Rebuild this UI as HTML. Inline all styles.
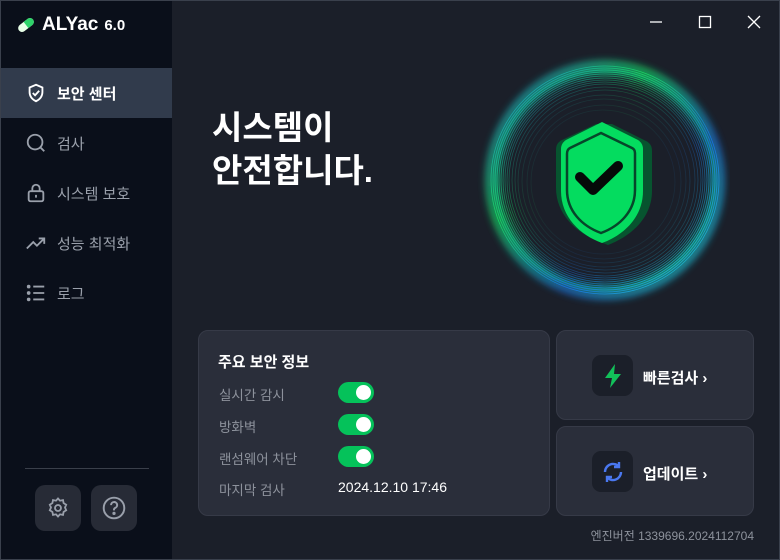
<!DOCTYPE html>
<html><head><meta charset="utf-8"><style>
*{margin:0;padding:0;box-sizing:border-box}
body{width:780px;height:560px;background:#1b1f29;font-family:"Liberation Sans","Noto Sans CJK KR",sans-serif;position:relative;overflow:hidden;color:#fff}
.side{position:absolute;left:1px;top:1px;width:171px;height:558px;background:#0a0f1a}
.logo{position:absolute;left:15px;top:13px;font-size:19px;font-weight:bold;display:flex;align-items:center;gap:6px}
.logo small{font-size:15px}
.nav{position:absolute;left:0;width:171px;height:50px;display:flex;align-items:center;padding-left:24px;font-size:15px;color:#9aa0ab;gap:10px}
.nav.act{background:#313b4c;color:#fff;font-weight:bold}
.nav svg{width:22px;height:22px}
.hr{position:absolute;left:24px;top:467px;width:124px;height:1px;background:#3a3f4a}
.sb{position:absolute;top:484px;width:46px;height:46px;border-radius:10px;background:#272b36;display:flex;align-items:center;justify-content:center}
.title{position:absolute;left:212px;top:106px;font-size:33px;font-weight:bold;line-height:43px}
.card{position:absolute;background:#2a2e3a;border:1px solid #363a47;border-radius:10px}
.lab{position:absolute;left:20px;font-size:13.5px;color:#8d929c}
.tg{position:absolute;left:139px;width:36px;height:21px;border-radius:11px;background:#05c25a}
.tg::after{content:"";position:absolute;right:3px;top:3px;width:15px;height:15px;border-radius:50%;background:#fff}
.ib{position:absolute;left:35px;width:41px;height:41px;border-radius:9px;background:#1b1f29;display:flex;align-items:center;justify-content:center}
.bt{position:absolute;left:86px;font-size:15px;font-weight:bold}
.ctl{position:absolute;top:15px;stroke:#fff;stroke-width:1.3;fill:none}
</style></head><body>
<div class="side">
<div class="logo"><svg width="20" height="16" viewBox="0 0 18 14"><g transform="rotate(-38 9 7)"><rect x="1" y="3.5" width="16" height="7" rx="3.5" fill="#e8ffe8"/><path d="M9 3.5h4.5a3.5 3.5 0 0 1 0 7H9z" fill="#2ed36a"/></g></svg>ALYac <small>6.0</small></div>
<div class="nav act" style="top:67px"><svg viewBox="0 0 24 24" fill="none" stroke="#fff" stroke-width="2"><path d="M12 3l7 3v5c0 5-3 8-7 10-4-2-7-5-7-10V6z"/><path d="M8.5 12l2.5 2.5 4.5-5"/></svg>보안 센터</div>
<div class="nav" style="top:117px"><svg viewBox="0 0 24 24" fill="none" stroke="#9aa0ab" stroke-width="2"><circle cx="11" cy="11" r="8"/><path d="M17 17l4 4"/></svg>검사</div>
<div class="nav" style="top:167px"><svg viewBox="0 0 24 24" fill="none" stroke="#9aa0ab" stroke-width="2"><rect x="4" y="10" width="16" height="11" rx="2"/><path d="M8 10V7a4 4 0 0 1 8 0v3M12 14v3"/></svg>시스템 보호</div>
<div class="nav" style="top:217px"><svg viewBox="0 0 24 24" fill="none" stroke="#9aa0ab" stroke-width="2"><path d="M2 18l7-7 4 4 8-8M15 7h6v6"/></svg>성능 최적화</div>
<div class="nav" style="top:267px"><svg viewBox="0 0 24 24" fill="none" stroke="#9aa0ab" stroke-width="2"><path d="M9 5h12M9 12h12M9 19h12"/><circle cx="4" cy="5" r="1"/><circle cx="4" cy="12" r="1"/><circle cx="4" cy="19" r="1"/></svg>로그</div>
<div class="hr"></div>
<div class="sb" style="left:34px"><svg width="24" height="24" viewBox="0 0 24 24" fill="none" stroke="#9aa0ab" stroke-width="1.8"><circle cx="12" cy="12" r="3"/><path d="M12 2.5l2 2.2 3-.6.6 3 2.6 1.6-1.2 2.8 1.2 2.8-2.6 1.6-.6 3-3-.6-2 2.2-2-2.2-3 .6-.6-3-2.6-1.6 1.2-2.8-1.2-2.8 2.6-1.6.6-3 3 .6z"/></svg></div>
<div class="sb" style="left:90px"><svg width="26" height="26" viewBox="0 0 24 24" fill="none" stroke="#9aa0ab" stroke-width="1.8"><circle cx="12" cy="12" r="9.5"/><path d="M9.3 9.3a2.8 2.8 0 1 1 3.8 2.6c-.7.3-1.1.9-1.1 1.6v.7"/><circle cx="12" cy="17" r=".6" fill="#9aa0ab"/></svg></div>
</div>
<svg class="ctl" style="left:649px" width="14" height="14"><path d="M1 7h12"/></svg>
<svg class="ctl" style="left:698px" width="14" height="14"><rect x="1.5" y="1.5" width="11" height="11"/></svg>
<svg class="ctl" style="left:747px" width="14" height="14"><path d="M1 1l12 12M13 1L1 13"/></svg>
<div class="title">시스템이<br>안전합니다.</div>
<svg style="position:absolute;left:470px;top:50px" width="260" height="260" viewBox="0 0 260 260">
<defs>
<radialGradient id="g" cx="50%" cy="50%" r="50%"><stop offset="0.8" stop-color="#1b1f29" stop-opacity="0"/><stop offset="0.9" stop-color="#14b07a" stop-opacity="0.7"/><stop offset="1" stop-color="#1b1f29" stop-opacity="0"/></radialGradient>
<linearGradient id="r" x1="0" y1="0" x2="1" y2="1"><stop offset="0" stop-color="#1f7de0"/><stop offset="0.35" stop-color="#18d860"/><stop offset="0.65" stop-color="#1a6ee0"/><stop offset="1" stop-color="#20e0c0"/></linearGradient>
<filter id="b"><feGaussianBlur stdDeviation="4"/></filter>
</defs>
<circle cx="135" cy="130" r="122" fill="url(#g)"/>
<circle cx="135" cy="130" r="116" fill="none" stroke="url(#r)" stroke-width="6" filter="url(#b)" opacity=".9"/>
<g fill="none" stroke="url(#r)" stroke-width="0.8">
<circle cx="135" cy="130" r="114"/><circle cx="135" cy="130" r="112"/><circle cx="135" cy="130" r="110"/><circle cx="135" cy="130" r="108"/><circle cx="135" cy="130" r="106" opacity=".8"/><circle cx="135" cy="130" r="104" opacity=".7"/><circle cx="135" cy="130" r="102" opacity=".6"/><circle cx="135" cy="130" r="100" opacity=".5"/><circle cx="135" cy="130" r="98" opacity=".45"/><circle cx="135" cy="130" r="96" opacity=".4"/><circle cx="135" cy="130" r="93" opacity=".3"/><circle cx="135" cy="130" r="90" opacity=".25"/><circle cx="134" cy="131" r="86" opacity=".2"/><circle cx="134" cy="131" r="82" opacity=".15"/><circle cx="134" cy="132" r="77" opacity=".12"/><circle cx="133" cy="132" r="72" opacity=".1"/>
</g>
<path d="M142 74l34 17c4 2 6 5 6 10v40c0 26-20 45-44 54l-8-3 c-24-9-44-28-44-54v-38c0-5 2-8 6-10l34-16z" fill="#07542f"/>
<path d="M132 72l36 18c3 2 5 5 5 9v42c0 26-19 44-41 52c-22-8-41-26-41-52V99c0-4 2-7 5-9z" fill="#04dc5f"/>
<path d="M131 83l31 15c2 1 3 3 3 5v37c0 21-15 36-34 43c-19-7-34-22-34-43V104c0-3 1-5 3-6z" fill="none" stroke="#06462a" stroke-width="2.5"/>
<path d="M110 127l13 13 25-24" fill="none" stroke="#050a08" stroke-width="10" stroke-linecap="round" stroke-linejoin="round"/>
</svg>
<div class="card" style="left:198px;top:330px;width:352px;height:186px">
<div style="position:absolute;left:19px;top:20px;font-size:15px;font-weight:bold">주요 보안 정보</div>
<div class="lab" style="top:53px">실시간 감시</div><div class="tg" style="top:51px"></div>
<div class="lab" style="top:85px">방화벽</div><div class="tg" style="top:83px"></div>
<div class="lab" style="top:117px">랜섬웨어 차단</div><div class="tg" style="top:115px"></div>
<div class="lab" style="top:148px">마지막 검사</div>
<div style="position:absolute;left:139px;top:148px;font-size:14px">2024.12.10 17:46</div>
</div>
<div class="card" style="left:556px;top:330px;width:198px;height:90px">
<div class="ib" style="top:24px"><svg width="20" height="26" viewBox="0 0 20 26"><path d="M12 1L2 15h7l-2 10 11-14h-7z" fill="#12c15a"/></svg></div>
<div class="bt" style="top:36px">빠른검사 ›</div></div>
<div class="card" style="left:556px;top:426px;width:198px;height:90px">
<div class="ib" style="top:24px"><svg width="24" height="24" viewBox="0 0 24 24" fill="none" stroke="#4a78f0" stroke-width="2.4"><path d="M4 12a8 8 0 0 1 14-5.3M20 12a8 8 0 0 1-14 5.3"/><path d="M18 2v5h-5M6 22v-5h5"/></svg></div>
<div class="bt" style="top:36px">업데이트 ›</div></div>
<div style="position:absolute;right:26px;top:527px;font-size:12px;color:#8d929c">엔진버전 1339696.2024112704</div>
<div style="position:absolute;inset:0;border:1px solid #3a404c;pointer-events:none"></div>
</body></html>
